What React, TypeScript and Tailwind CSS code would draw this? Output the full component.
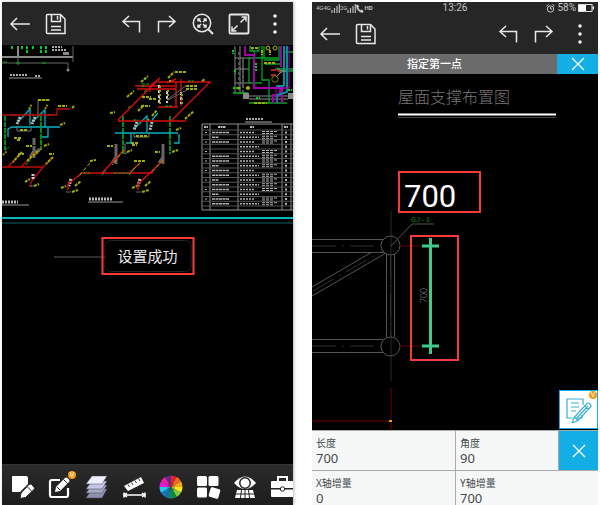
import type { ReactNode } from "react";

const CJK = "font-['Noto_Sans','Noto_Sans_CJK_SC',sans-serif]";

function IconButton({ label, children }: { label: string; children: ReactNode }) {
  return (
    <button type="button" aria-label={label} className="flex h-9 w-9 shrink-0 items-center justify-center">
      {children}
    </button>
  );
}

const line = { fill: "none", stroke: "#e8e8e8", strokeWidth: 1.5 } as const;

const BackIcon = () => (
  <svg width="22" height="22" viewBox="0 0 22 22" {...line}>
    <path d="M21 11H2M8 5L2 11L8 17" />
  </svg>
);
const SaveIcon = () => (
  <svg width="22" height="22" viewBox="0 0 22 22" {...line}>
    <path d="M2.5 1.5H15.5L20 6V20.5H2.500Q1.500 20.500 1.500 19.500V2.500Q1.500 1.500 2.500 1.500Z" />
    <path d="M6.500 1.500V8.500H15.500V1.500M12.500 3V6.500M6 13.500H16M6 17H16" />
  </svg>
);
const UndoIcon = () => (
  <svg width="20" height="20" viewBox="0 0 20 20" {...line}>
    <path d="M18.500 18.500V7.500H2M8 2L2 7.500L8 13" />
  </svg>
);
const RedoIcon = () => (
  <svg width="20" height="20" viewBox="0 0 20 20" {...line}>
    <path d="M1.500 18.500V7.500H18M12 2L18 7.500L12 13" />
  </svg>
);
const ZoomIcon = () => (
  <svg width="22" height="22" viewBox="0 0 22 22" {...line}>
    <circle cx="10" cy="10" r="8.700" />
    <path d="M16.500 16.500L21 21" strokeWidth="2" />
    <path d="M6 8.500V6H8.500M6 6L9 9M14 8.500V6H11.500M14 6L11 9M6 11.500V14H8.500M6 14L9 11M14 11.500V14H11.500M14 14L11 11" />
  </svg>
);
const FullIcon = () => (
  <svg width="22" height="22" viewBox="0 0 22 22" {...line}>
    <rect x="1.500" y="1.500" width="19" height="19" rx="1" strokeWidth="1.800" />
    <path d="M12.500 9.500L18 4M13.500 4H18V8.500M9.500 12.500L4 18M4 13.500V18H8.500" />
  </svg>
);
const MoreIcon = () => (
  <svg width="22" height="22" viewBox="0 0 22 22" fill="#eee">
    <circle cx="11" cy="3" r="1.800" />
    <circle cx="11" cy="11" r="1.800" />
    <circle cx="11" cy="19" r="1.800" />
  </svg>
);
const CloseIcon = () => (
  <svg width="14" height="14" viewBox="0 0 14 14" fill="none" stroke="#fff" strokeWidth="1.300">
    <path d="M1 1L13 13M13 1L1 13" />
  </svg>
);

function VipBadge({ className }: { className: string }) {
  return (
    <span
      className={`absolute flex h-2 w-2 items-center justify-center rounded-full bg-[#f59a17] font-['Roboto',sans-serif] text-[7px] leading-none text-white ${className}`}
    >
      V
    </span>
  );
}

const wheel = ["#e8202a", "#f26a1b", "#f7a51c", "#f8e71c", "#7ac943", "#118a3c", "#127c8f", "#1b75bb", "#26c6f0", "#e815d8", "#f01ba0", "#5b2d90"];

function wedge(i: number) {
  const a = ((i * 30 - 90) * Math.PI) / 180;
  const b = (((i + 1) * 30 - 90) * Math.PI) / 180;
  return `M12 12L${12 + 11.5 * Math.cos(a)} ${12 + 11.5 * Math.sin(a)}A11.5 11.5 0 0 1 ${12 + 11.5 * Math.cos(b)} ${12 + 11.5 * Math.sin(b)}Z`;
}

const tools: { label: string; vip?: boolean; icon: ReactNode }[] = [
  {
    label: "新建批注",
    icon: (
      <>
        <path d="M2 1H15Q17 1 17 3V9L9 17H2Q1 17 1 16V2Q1 1 2 1Z" fill="#fff" />
        <path d="M10 18L18 9.500Q19 8.500 20.500 9.500L23 12Q24 13.500 23 14.500L14.500 22.500L9 23.500Z" fill="#fff" stroke="#252525" strokeWidth="1" />
        <path d="M16 11.500L21 16.500" stroke="#333" />
      </>
    ),
  },
  {
    label: "编辑",
    vip: true,
    icon: (
      <>
        <path d="M12 5H4Q2 5 2 7V20Q2 22 4 22H18Q20 22 20 20V13" fill="none" stroke="#fff" strokeWidth="2.200" />
        <path d="M8 12L17 3Q18.500 2 20 3.500L21 4.500Q22 6 21 7L12 16L7 17Z" fill="#fff" />
        <path d="M15.500 4.500L20 9M9 12L12 15" stroke="#333" />
      </>
    ),
  },
  {
    label: "图层",
    icon: (
      <>
        <path d="M7 14H22L17 23H1Z" fill="#8f90aa" stroke="#44455a" strokeWidth=".5" />
        <path d="M7 10H22L17 18H1Z" fill="#a8a9c2" stroke="#44455a" strokeWidth=".5" />
        <path d="M7 6H22L17 14H1Z" fill="#c5c6df" stroke="#44455a" strokeWidth=".5" />
        <path d="M7 1H22L17 9H1Z" fill="#eeeeff" stroke="#44455a" strokeWidth=".5" />
      </>
    ),
  },
  {
    label: "测量",
    icon: (
      <>
        <path d="M2 11L19 2L22 8L6 16Z" fill="#fff" />
        <path d="M6 9.500L7.500 12M9.500 7.500L11 10M13 5.500L14.500 8M16.500 3.500L18 6" stroke="#333" />
        <path d="M2 20H23M2 17.500V22.500M23 17.500V22.500M5 18L2 20L5 22M20 18L23 20L20 22" fill="none" stroke="#fff" strokeWidth="1.500" />
      </>
    ),
  },
  {
    label: "颜色",
    icon: (
      <>
        {wheel.map((c, i) => (
          <path key={c} d={wedge(i)} fill={c} />
        ))}
        <circle cx="12" cy="12" r="4" fill="#333" fillOpacity=".25" />
      </>
    ),
  },
  {
    label: "布局",
    icon: (
      <>
        <rect x="1" y="1" width="10" height="10" rx="1.500" fill="#fff" />
        <rect x="12.500" y="1" width="10" height="10" rx="1.500" fill="#fff" />
        <rect x="1" y="12.500" width="10" height="10" rx="1.500" fill="#fff" />
        <rect x="13.500" y="13" width="10" height="10" rx="1.500" fill="#fff" transform="rotate(16 18.500 18)" />
      </>
    ),
  },
  {
    label: "视图",
    icon: (
      <>
        <path d="M1 8Q12 -5 23 8Q12 20 1 8Z" fill="#fff" />
        <circle cx="12" cy="8" r="5.200" fill="#fff" stroke="#222" strokeWidth="1.500" />
        <path d="M4 15H20L22 23H2Z" fill="#fff" />
        <path d="M3 19H21M8.500 15L7.500 23M15.500 15L16.500 23M12 15V23" stroke="#222" />
      </>
    ),
  },
  {
    label: "工具箱",
    icon: (
      <>
        <path d="M8 6V2H17V6" fill="none" stroke="#fff" strokeWidth="2" />
        <path d="M2 6H25V13H1V7Q1 6 2 6Z" fill="#fff" />
        <path d="M1 14.500H25V22H2Q1 22 1 21Z" fill="#fff" />
        <circle cx="12.500" cy="14" r="2.200" fill="#fff" stroke="#222" />
      </>
    ),
  },
];

/* Each entry is one pen: colour, width, path and optional dash pattern. */
type Pen = [color: string, width: number, d: string, dash?: string];

/* One riser assembly: cyan branch, valves and the pipe drops below it. */
const riser: Pen[] = [
  ["#00b4c0", 1.3, "M8 137V129L12 127H60M17 123L30 109V125M32 122L45 110V127M42 137H48V128"],
  ["#bbbbbb", 3, "M20 117L17 124M35 117L32 124", "2 1"],
  ["#777777", 1, "M17 126V131H31V126M38 100V115M38 100H50"],
  ["#008c18", 2, "M5 116V150M41 116V148", "5 1"],
  ["#12b020", 1, "M10 115H16M28 115H34M48 115H54M5 150L9 147M26 165L31 159M10 165L14 160", "3 1"],
  ["#a3ac00", 2, "M38 100H50M58 106H67M20 130H27M60 125L65 123M72 108L74 106M14 138H22M17 140H20M44 146L49 144M26 146H32", "3 1"],
  ["#909000", 2, "M29 109L32 104M45 109L48 104M36 154L42 148M3 155L7 151", "2 1"],
  ["#666666", 3, "M34 138V158M30 157L34 151M36 152L40 149", "7 1"],
];

const leftPens: Pen[] = [
  ["#00d020", 2, "M12 46V49M22 46V49M27 46V53M33 46V49M41 46V54M46 46V54", "3 1"],
  ["#888888", 2, "M2 57H73M18 46V57M63 54H69"],
  ["#666666", 1, "M73 46V62M2 63H68V70M18 57V65"],
  ["#aaaaaa", 2, "M52 47H62M52 50H66M10 75H28M35 76H40", "2 1"],
  ["#999999", 1, "M9 78H42M2 205H29M88 202H123"],
  ["#bbbbbb", 3, "M2 202H18M89 199H112", "2 1"],
  ["#00a820", 1, "M3 62H7M16 63H20M42 63H46"],
  ["#c00a0a", 1.3, "M2 115H57V109H70M2 167H43M8 167L19 155M21 167L36 152M43 167L53 157M43 167L31 182V187"],
  ["#a3ac00", 2, "M18 154H24M49 154H54M25 182L30 179M34 186L39 184M22 152L13 162M38 151L27 161M53 157L46 164", "3 1"],
  ["#cccccc", 3, "M33 174V180M71 179L69 186M140 179L138 186", "2 1"],
  ["#666666", 1, "M29 186H34M66 192H71M136 192H141"],
  ["#d80c0c", 1.4, "M118 120L159 79M135 86H175M137 89H176M150 92V88M158 82H210L171 121M150 86L160 78M158 107H178M176 82V107M167 83L176 79M181 79V106M118 121H186M82 173H153M82 173L68 184V190M102 173L124 150M129 173L140 163M150 173L163 160M150 173L138 184V190"],
  ["#a3ac00", 2, "M141 82L148 76M127 97L134 91M142 97H151M141 106H150M148 120L149 119M185 119L194 111M168 78L174 72M175 72H186M186 86H197M186 89H198M202 81L205 79M149 99H157M90 161L96 160M134 161H145M107 146H113M155 152H160M75 186L81 181M145 186L151 181M61 188L66 186M72 192L78 190M132 188L137 186M142 192L149 190M110 113L115 112M131 143H138M132 145H137", "3 1"],
  ["#a3ac00", 1, "M90 163L78 177M140 163L131 172M124 150L112 165M163 160L151 173", "4 2"],
  ["#12a820", 1, "M144 92L147 89M128 108L131 105M188 81H194M84 173H90M114 173H130M102 175L106 170M129 175L134 169M165 106L173 106M141 86H146M133 120H138M145 80L148 77M142 84H149", "3 1"],
  ["#cccccc", 2, "M159 85V103M167 91V103M181 92V104", "3 2"],
  ["#999900", 2, "M160 86V105M168 90V102M182 94V106M170 80V84", "2 2"],
  ["#666666", 1, "M168 99L187 85M168 100L187 90"],
  ["#888888", 1, "M235 46V94M240 46V94M243 58V85M235 58H250M235 69H249M235 83H249M240 93H246M250 46L255 54M249 96H288M249 99H288"],
  ["#555555", 2, "M239 52V94M243 60V92", "3 2"],
  ["#00a520", 1.3, "M262 46V80H269V103M249 83V58H279M249 83H262M250 46V51H259V46M279 46V60H264M265 64H280M233 93H248M260 103H287M284 52H293M284 46V52M264 46V58M275 69H293M281 71H293M249 103H262"],
  ["#00d020", 2, "M233 50V54M235 70V74M233 88H239M256 63V72M256 98H260M288 90H292", "2 1"],
  ["#a000a8", 2, "M245 46V55H254V88H282V103M281 46V67M273 103V95H280V88"],
  ["#008f98", 2, "M284 46V86M287 46V92L277 95V103M284 86H276"],
  ["#a000a8", 1, "M289 46V88H276V103M264 88H290"],
  ["#a3ac00", 2, "M251 48H258M264 63H276M246 88H250M254 103H267M262 50V55M270 50V55", "3 1"],
  ["#b02020", 2, "M271 70H276M271 75H276M277 70L282 73"],
  ["#999999", 1, "M277 68L281 71L286 71M277 76L281 72"],
  ["#00b8bd", 2, "M2 218H293"],
  ["#006168", 1, "M2 223H293"],
  ["#aaaaaa", 2, "M246 119H263", "2 1"],
  ["#aaaaaa", 1, "M245 122H272"],
  ["#5a5a5a", 1, "M54 257H118"],
];

const rows = Array.from({ length: 17 }, (_, i) => 130 + i * 4.75);

function Pens({ pens }: { pens: Pen[] }) {
  return (
    <>
      {pens.map(([stroke, width, d, dash], i) => (
        <path key={i} d={d} fill="none" stroke={stroke} strokeWidth={width} strokeDasharray={dash} />
      ))}
    </>
  );
}

function PlumbingDrawing() {
  return (
    <svg viewBox="2 45 291 419" className="block h-auto w-full" role="img" aria-label="CAD 图纸">
      <Pens pens={riser} />
      <g transform="translate(82 6)">
        <Pens
          pens={[
            ["#008c18", 2, "M41 110V148M88 110V148", "5 1"],
            ["#00b4c0", 1.3, "M33 127H96M53 122L65 110V126M44 137H49V127M92 137H97V128M70 114L76 107"],
            ["#bbbbbb", 3, "M55 116L52 124M70 116L68 124", "2 1"],
            ["#777777", 1, "M52 126V131H67V126M43 138V148L48 145"],
            ["#666666", 3, "M34 138V158M81 138V158M30 157L34 151M77 157L81 151"],
            ["#a3ac00", 2, "M54 130H65M94 124L99 122M45 146L50 144M90 146L96 144M70 110L75 104M56 105L62 99", "3 1"],
          ]}
        />
      </g>
      <Pens pens={leftPens} />
      <g fill="#888">
        <rect x="243" y="93" width="6" height="6" />
        <rect x="288" y="93" width="5" height="6" />
        <rect x="63" y="52" width="6" height="3" />
        <circle cx="68" cy="70" r="1.500" />
      </g>
      <g fill="none" stroke="#b9b900">
        <circle cx="268" cy="48" r="2" />
        <circle cx="275" cy="48" r="2" />
        <circle cx="275" cy="79" r="3.200" stroke="#77770a" />
        <circle cx="239" cy="88" r="1" />
        <circle cx="248" cy="88" r="1.500" />
      </g>
      <path d="M202 124H293M202 210H293M202 124V210M210 124V210M238 124V210M282 124V210M291 124V210" fill="none" stroke="#909090" />
      {rows.map((y, i) => (
        <g key={y} fill="none" stroke="#b5b5b5">
          <path d={`M202 ${y}H293`} stroke="#555" />
          {i < 16 && (
            <>
              {i !== 3 && i !== 4 && <path d={`M212 ${y + 2.5}H${i % 3 === 1 ? 219 : 229}`} strokeWidth="1.500" strokeDasharray="3 .5" />}
              <path d={`M240 ${y + 2.5}H${i % 2 ? 259 : 255}`} strokeWidth="1.500" strokeDasharray="2 1" />
              {i % 5 !== 3 && <path d={`M262 ${y + 1.5}H278M262 ${y + 3.5}H274`} strokeDasharray="3 1" />}
              <path d={`M285 ${y + 2.5}H287`} strokeWidth="2" />
              {i % 2 === 0 && <path d={`M205 ${y + 2.5}H207`} />}
            </>
          )}
        </g>
      ))}
      <path d="M204 127H208M218 127H226M250 127H254M284 127H288" stroke="#bbb" strokeWidth="2" strokeDasharray="2 .5" />
    </svg>
  );
}

function RoofDrawing() {
  return (
    <svg viewBox="312 74 286 356" className="block h-auto w-full" role="img" aria-label="屋面支撑布置图">
      <text x="398" y="103" fill="#787878" fontSize="16" fontWeight="300" className={CJK}>
        屋面支撑布置图
      </text>
      <path d="M398 114.500H556" stroke="#fff" strokeWidth="2" />
      <path d="M398 117.500H556" stroke="#444" />
      <path d="M391 211V381" stroke="#292929" />
      <g fill="none" stroke="#555">
        <path d="M312 239.500H383M312 252.500H384M312 339.500H383M312 352.500H383M386.500 254V337M394.500 254V337M312 287L372 252M312 296L386 253" />
        <path d="M391 246L412 224H434" />
        <circle cx="390.500" cy="245.500" r="9.500" />
        <circle cx="390.500" cy="346.500" r="9.500" />
      </g>
      <path d="M312 246H382M312 346H382M313 291L382 251M390.500 255V336" fill="none" stroke="#303030" strokeDasharray="24 6 2 6" />
      <path d="M400 246H423M400 346H423" stroke="#550000" />
      <text x="411" y="222" fill="#008a00" fontSize="8" className="font-['Liberation_Mono',monospace]">
        GJ-1
      </text>
      <path d="M430.500 238V354" stroke="#42c98d" strokeWidth="3" />
      <path d="M422 246H439M422 346H439" stroke="#42c98d" strokeWidth="3" />
      <text transform="translate(427 303) rotate(-90)" fill="#888" fontSize="9" className="font-['Roboto',sans-serif]" fontWeight="300">
        700
      </text>
      <text x="404" y="207" fill="#fff" fontSize="31" className="font-['Roboto',sans-serif]">
        700
      </text>
      <g fill="none" stroke="#f73a38" strokeWidth="2">
        <rect x="399" y="172" width="81" height="40" />
        <rect x="411" y="236" width="47" height="124" />
      </g>
      <path d="M312 421H391M391 388V430" fill="none" stroke="#390000" strokeWidth="2" />
      <rect x="389" y="420" width="3" height="2" fill="#d9b000" />
    </svg>
  );
}

function Field({ id, label, value, className }: { id: string; label: string; value: string; className: string }) {
  return (
    <div className={`flex min-w-0 flex-col border-[#a8abab] pl-1 pt-[6px] ${className}`}>
      <label htmlFor={id} className="text-[10px] leading-3">
        {label}
      </label>
      <input id={id} defaultValue={value} className="h-[18px] w-full min-w-0 bg-transparent p-0 text-[13px] leading-4 outline-none" />
    </div>
  );
}

function LeftPhone() {
  return (
    <section className="flex min-w-0 flex-col overflow-hidden bg-black shadow-[1px_0_3px_#bbb]">
      <header className="flex h-[43px] items-center bg-[#262626]">
        <IconButton label="返回"><BackIcon /></IconButton>
        <IconButton label="保存"><SaveIcon /></IconButton>
        <div className="ml-auto flex">
          <IconButton label="撤销"><UndoIcon /></IconButton>
          <IconButton label="重做"><RedoIcon /></IconButton>
          <IconButton label="缩放"><ZoomIcon /></IconButton>
          <IconButton label="全屏"><FullIcon /></IconButton>
          <IconButton label="更多"><MoreIcon /></IconButton>
        </div>
      </header>
      <div className="relative">
        <PlumbingDrawing />
        <div
          role="status"
          className="absolute left-1/2 top-[192px] flex h-[38px] w-[93px] -translate-x-1/2 border-2 border-[#f73a38] p-px"
        >
          <span className="flex flex-1 items-center justify-center rounded-md border border-[#1d2224] bg-black text-[15px] leading-5 text-[#e8e8e8]">
            设置成功
          </span>
        </div>
      </div>
      <nav className="flex h-[41px] items-center overflow-hidden border-t border-[#333] bg-linear-to-b from-[#2b2b2b] to-[#1d1d1d] pl-0.5 pt-1">
        {tools.map((t) => (
          <button key={t.label} type="button" aria-label={t.label} className="relative flex h-9 w-[37px] shrink-0 items-center justify-center">
            <svg width="24" height="24" viewBox="0 0 24 24" overflow="visible">
              {t.icon}
            </svg>
            {t.vip && <VipBadge className="right-0.5 top-0.5" />}
          </button>
        ))}
      </nav>
    </section>
  );
}

function SignalBars() {
  return (
    <svg width="9" height="9" viewBox="0 0 9 9" stroke="#bbb" strokeWidth="1.200">
      <path d="M1 9V6M3.500 9V4M6 9V2M8.300 9V0" />
    </svg>
  );
}

function RightPhone() {
  return (
    <section className="flex min-w-0 flex-col overflow-hidden bg-black">
      <div className="grid h-3 grid-cols-3 items-center bg-[#262626] px-1 font-['Roboto',sans-serif] text-[10px] leading-3 text-[#c4c4c4]">
        <div className="flex items-center">
          <span className="text-[6px] leading-none">4G</span>
          <span className="text-[6px] leading-none">4G</span>
          <SignalBars />
          <span className="text-[6px] leading-none">2G</span>
          <SignalBars />
          <svg width="8" height="9" viewBox="0 0 8 9" fill="none" stroke="#ccc" strokeWidth="1.800">
            <path d="M1 1Q1 7 7 8M1 1L2.500 3M7 8L5 6" />
          </svg>
          <span className="text-[6px] font-bold leading-none">HD</span>
        </div>
        <span className="text-center">13:26</span>
        <div className="flex items-center justify-end gap-0.5">
          <svg width="9" height="9" viewBox="0 0 9 9" fill="none" stroke="#ccc">
            <circle cx="4.500" cy="5" r="3.200" />
            <path d="M4.500 3V5H6M.5 2L2.500 .5M8.500 2L6.500 .5" />
          </svg>
          <span>58%</span>
          <svg width="16" height="8" viewBox="0 0 16 8">
            <rect x=".5" y=".5" width="13.500" height="7" fill="none" stroke="#ddd" />
            <path d="M1 1H8V7H1ZM14.500 2.500H16V5.500H14.500Z" fill="#fff" />
          </svg>
        </div>
      </div>
      <header className="flex h-10 items-center bg-[#262626]">
        <IconButton label="返回"><BackIcon /></IconButton>
        <IconButton label="保存"><SaveIcon /></IconButton>
        <div className="ml-auto flex">
          <IconButton label="撤销"><UndoIcon /></IconButton>
          <IconButton label="重做"><RedoIcon /></IconButton>
          <IconButton label="更多"><MoreIcon /></IconButton>
        </div>
      </header>
      <div className="flex h-5 bg-[#6b6b6b]">
        <p className="flex-1 text-center text-[11px] font-medium leading-5 text-white">指定第一点</p>
        <button type="button" aria-label="关闭提示" className="flex w-[41px] items-center justify-center bg-[#13aee5]">
          <CloseIcon />
        </button>
      </div>
      <div className="relative">
        <RoofDrawing />
        <button type="button" aria-label="批注" className="absolute bottom-px right-0 flex h-[39px] w-[39px] items-center justify-center border border-[#13aee5] bg-white">
          <svg width="26" height="26" viewBox="0 0 26 26" fill="none" stroke="#3badd8" strokeWidth="1.200">
            <path d="M17 8V2H1V21H7M16 18V21H11M5 6H13M5 10H13M5 14H10" />
            <path d="M6 26L8.500 20L21 6.500Q22 5.500 23.500 6.500L24.500 7.500Q25.500 9 24.500 10L12 23.500ZM8.500 20L12 23.500M19 9L22.500 12.500M10 22L22 9" />
          </svg>
          <VipBadge className="right-0 top-0" />
        </button>
      </div>
      <form className="bg-[#f6f8f8] text-[#444a4d]">
        <div className="flex h-10 border-t border-[#a8abab]">
          <Field id="length" label="长度" value="700" className="flex-1 border-r" />
          <Field id="angle" label="角度" value="90" className="w-[103px] border-r" />
          <button type="button" aria-label="关闭输入" className="flex w-[39px] items-center justify-center bg-[#13aee5]">
            <CloseIcon />
          </button>
        </div>
        <div className="flex h-[35px] border-t border-[#a8abab]">
          <Field id="dx" label="X轴增量" value="0" className="flex-1 border-r" />
          <Field id="dy" label="Y轴增量" value="700" className="w-[142px]" />
        </div>
      </form>
    </section>
  );
}

export default function App() {
  return (
    <main className={`grid grid-cols-[291fr_286fr] gap-[19px] bg-white px-0.5 pt-0.5 ${CJK}`}>
      <LeftPhone />
      <RightPhone />
    </main>
  );
}
